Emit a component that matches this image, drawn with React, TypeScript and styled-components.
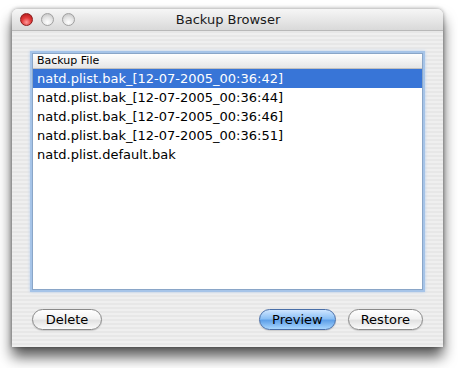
import React from "react";
import styled, { createGlobalStyle } from "styled-components";

const files = [
  "natd.plist.bak_[12-07-2005_00:36:42]",
  "natd.plist.bak_[12-07-2005_00:36:44]",
  "natd.plist.bak_[12-07-2005_00:36:46]",
  "natd.plist.bak_[12-07-2005_00:36:51]",
  "natd.plist.default.bak",
];

function App() {
  return (
    <>
      <GlobalStyle />
      <Page>
        <Window>
          <TitleBar>
            <Lights>
              <Light $color="red" />
              <Light $color="gray" />
              <Light $color="gray" />
            </Lights>
            <Title>Backup Browser</Title>
          </TitleBar>
          <Body>
            <ListBox>
              <Header>Backup File</Header>
              {files.map((f, i) => (
                <Row key={f} $selected={i === 0}>
                  {f}
                </Row>
              ))}
            </ListBox>
            <Buttons>
              <Button>Delete</Button>
              <Spacer />
              <Button $default>Preview</Button>
              <Button>Restore</Button>
            </Buttons>
          </Body>
        </Window>
      </Page>
    </>
  );
}

export default App;

const GlobalStyle = createGlobalStyle`
  html, body {
    margin: 0;
    background: #ffffff;
    font-family: "DejaVu Sans", "Liberation Sans", sans-serif;
  }
`;

const Page = styled.div`
  width: 458px;
  height: 368px;
  box-sizing: border-box;
  padding: 9px 0 0 12px;
  background: #ffffff;
`;

const Window = styled.div`
  width: 431px;
  height: 338px;
  display: flex;
  flex-direction: column;
  border-radius: 6px 6px 0 0;
  background: repeating-linear-gradient(
    to bottom,
    #efefef 0px,
    #efefef 2px,
    #e7e7e7 2px,
    #e7e7e7 4px
  );
  box-shadow: 0 10px 14px rgba(0, 0, 0, 0.65), 0 0 4px rgba(0, 0, 0, 0.4);
`;

const TitleBar = styled.div`
  height: 21px;
  position: relative;
  display: flex;
  align-items: center;
  justify-content: center;
  border-radius: 6px 6px 0 0;
  border-bottom: 1px solid #b8b8b8;
  background: linear-gradient(to bottom, #f6f6f6, #d9d9d9);
`;

const Lights = styled.div`
  position: absolute;
  left: 8px;
  top: 4px;
  display: flex;
  gap: 8px;
`;

const Light = styled.div<{ $color: "red" | "gray" }>`
  width: 13px;
  height: 13px;
  border-radius: 50%;
  box-sizing: border-box;
  border: 1px solid ${(p) => (p.$color === "red" ? "#8c1a1a" : "#a0a0a0")};
  background: ${(p) =>
    p.$color === "red"
      ? "radial-gradient(circle at 50% 75%, #ff9a9a 0%, #e33b3b 45%, #a81515 100%)"
      : "radial-gradient(circle at 50% 75%, #ffffff 0%, #e4e4e4 50%, #bdbdbd 100%)"};
`;

const Title = styled.div`
  font-size: 13px;
  color: #1a1a1a;
  margin-left: 1px;
`;

const Body = styled.div`
  flex: 1;
  display: flex;
  flex-direction: column;
  padding: 22px 20px 0 20px;
`;

const ListBox = styled.div`
  height: 235px;
  background: #ffffff;
  border: 1px solid #8aa6c8;
  box-shadow: 0 0 0 2px #a6c4e8, 0 0 3px 2px #b7d0ee;
  display: flex;
  flex-direction: column;
`;

const Header = styled.div`
  height: 14px;
  line-height: 14px;
  font-size: 11px;
  padding-left: 4px;
  color: #000;
  background: linear-gradient(to bottom, #ffffff, #e6e6e6);
  border-bottom: 1px solid #c0c0c0;
`;

const Row = styled.div<{ $selected?: boolean }>`
  height: 19px;
  line-height: 19px;
  font-size: 13px;
  padding-left: 4px;
  color: ${(p) => (p.$selected ? "#ffffff" : "#000000")};
  background: ${(p) => (p.$selected ? "#3875d7" : "transparent")};
`;

const Buttons = styled.div`
  display: flex;
  align-items: center;
  gap: 12px;
  margin-top: 19px;
`;

const Spacer = styled.div`
  flex: 1;
`;

const Button = styled.button<{ $default?: boolean }>`
  height: 21px;
  min-width: 70px;
  padding: 0 12px;
  border-radius: 11px;
  font-family: "DejaVu Sans", "Liberation Sans", sans-serif;
  font-size: 13px;
  color: #000;
  border: 1px solid ${(p) => (p.$default ? "#4a6fa8" : "#8a8a8a")};
  background: ${(p) =>
    p.$default
      ? "linear-gradient(to bottom, #cfe6ff 0%, #8cc0f5 45%, #5fa0e8 55%, #a8d6ff 100%)"
      : "linear-gradient(to bottom, #ffffff 0%, #f2f2f2 45%, #e2e2e2 55%, #fbfbfb 100%)"};
  box-shadow: 0 1px 1px rgba(0, 0, 0, 0.15);
`;
